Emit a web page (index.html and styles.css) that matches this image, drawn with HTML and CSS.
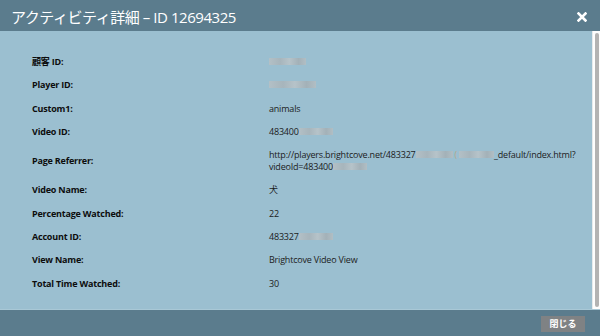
FILE: index.html
```html
<!DOCTYPE html>
<html lang="ja">
<head>
    <meta charset="UTF-8">
    <title>アクティビティ詳細</title>
    <link rel="stylesheet" href="styles.css">
</head>
<body>
    <div class="modal">
        <!-- Encabezado -->
        <div class="modal-header">
            <h1 class="modal-title">アクティビティ詳細 – ID 12694325</h1>
            <button class="close-x" aria-label="close">
                <svg width="10" height="10" viewBox="0 0 10 10">
                    <path d="M1.5 1.5 L8.5 8.5 M8.5 1.5 L1.5 8.5" stroke="#fff" stroke-width="2.6" stroke-linecap="square"/>
                </svg>
            </button>
        </div>

        <!-- Detalles -->
        <div class="modal-body">
            <div class="details">
                <div class="row">
                    <span class="label">顧客 ID:</span>
                    <span class="value"><span class="blur w37"></span></span>
                </div>
                <div class="row">
                    <span class="label">Player ID:</span>
                    <span class="value"><span class="blur w47"></span></span>
                </div>
                <div class="row">
                    <span class="label">Custom1:</span>
                    <span class="value">animals</span>
                </div>
                <div class="row">
                    <span class="label">Video ID:</span>
                    <span class="value">483400<span class="blur w34"></span></span>
                </div>
                <div class="row">
                    <span class="label">Page Referrer:</span>
                    <span class="value">http://players.brightcove.net/483327<span class="blur w38"></span><span class="paren">(</span><span class="blur w36"></span>_default/index.html?<br>videoId=483400<span class="blur w34"></span></span>
                </div>
                <div class="row">
                    <span class="label">Video Name:</span>
                    <span class="value">犬</span>
                </div>
                <div class="row">
                    <span class="label">Percentage Watched:</span>
                    <span class="value">22</span>
                </div>
                <div class="row">
                    <span class="label">Account ID:</span>
                    <span class="value">483327<span class="blur w34"></span></span>
                </div>
                <div class="row">
                    <span class="label">View Name:</span>
                    <span class="value">Brightcove Video View</span>
                </div>
                <div class="row">
                    <span class="label">Total Time Watched:</span>
                    <span class="value">30</span>
                </div>
            </div>
            <div class="scrollbar"><div class="thumb"></div></div>
        </div>

        <!-- Pie -->
        <div class="modal-footer">
            <button class="btn-close">閉じる</button>
        </div>
    </div>
</body>
</html>
```

FILE: styles.css
```css
* {
    margin: 0;
    padding: 0;
    box-sizing: border-box;
}

body {
    font-family: 'Open Sans', 'Noto Sans CJK JP', sans-serif;
    width: 600px;
    height: 336px;
    overflow: hidden;
    background-color: #5b7c8d;
}

.modal {
    display: flex;
    flex-direction: column;
    height: 336px;
}

.modal-header {
    height: 31px;
    background-color: #5b7c8d;
    display: flex;
    align-items: center;
    justify-content: space-between;
    padding: 0 11px 0 11px;
}

.modal-title {
    font-size: 15px;
    font-weight: 400;
    color: #fff;
    letter-spacing: -0.45px;
    margin-top: 1px;
}

.close-x {
    background: none;
    border: none;
    width: 10px;
    height: 10px;
    margin-right: 2px;
    margin-top: 2px;
    display: flex;
}

.modal-body {
    height: 279px;
    background-color: #9bbfd0;
    display: flex;
    border-bottom: 1px solid #a9c8d6;
}

.details {
    flex: 1;
    padding: 25px 0 0 32px;
    display: flex;
    flex-direction: column;
    gap: 11.3px;
}

.row {
    display: flex;
    align-items: center;
    font-size: 9px;
    line-height: 12px;
    color: #111;
    letter-spacing: -0.2px;
}

.label {
    width: 237px;
    font-weight: 700;
    color: #0d0d0d;
}

.value {
    font-weight: 400;
    color: #1c1c1c;
}

.blur {
    display: inline-block;
    height: 7px;
    vertical-align: 0;
    background: linear-gradient(90deg, #b3c0c6 0%, #a7b5bc 30%, #b6c3c9 55%, #a3b1b8 80%, #b1bec4 100%);
    filter: blur(0.5px);
}

.w34 { width: 34px; }
.w36 { width: 35px; }
.w37 { width: 37px; }
.w38 { width: 37px; }
.w47 { width: 47px; }

.paren {
    color: #b7a98a;
    padding: 0 2px;
}

.scrollbar {
    width: 8px;
    background-color: #fdfdfd;
    padding: 2px 1px 2px 2px;
    border-left: 1px solid #e6eaec;
}

.thumb {
    height: 100%;
    background-color: #b3b3b3;
    border-radius: 3px;
}

.modal-footer {
    flex: 1;
    background-color: #5b7c8d;
    display: flex;
    justify-content: flex-end;
    align-items: flex-start;
    padding: 6px 15px 0 0;
}

.btn-close {
    font-family: 'Noto Sans CJK JP', sans-serif;
    width: 44px;
    height: 16px;
    background-color: #7f8284;
    color: #fff;
    border: none;
    font-size: 9px;
    font-weight: 700;
    line-height: 16px;
}
```
